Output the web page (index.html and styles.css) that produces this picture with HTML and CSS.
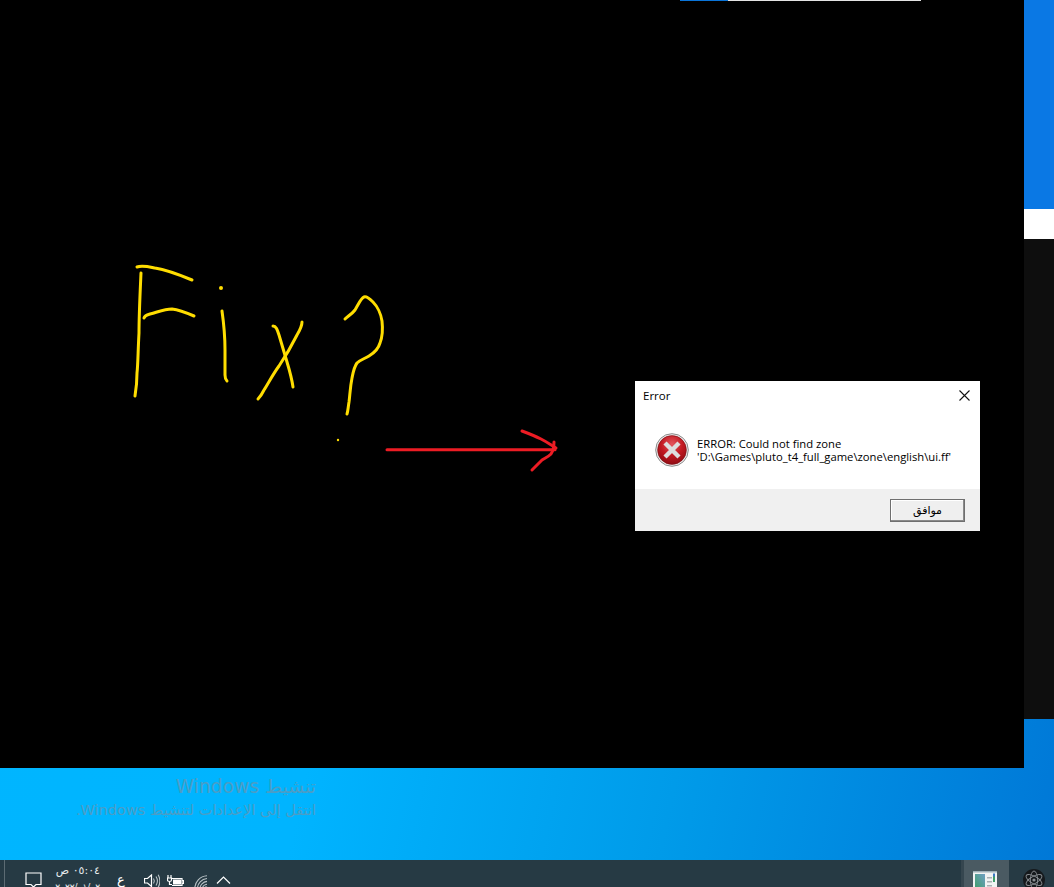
FILE: index.html
```html
<!DOCTYPE html>
<html lang="ar">
  <head>
    <meta charset="UTF-8" />
    <title>Error</title>
    <link rel="stylesheet" href="styles.css">
  </head>

  <body>
    <div class="screen">
      <div class="desktop">
        <div class="game">
          <div class="load-bar">
            <div class="load-done"></div>
            <div class="load-rest"></div>
          </div>

          <!-- the scribble drawn over the screenshot -->
          <svg class="scribble" width="1024" height="768" viewBox="0 0 1024 768">
            <g class="ink-yellow">
              <path d="M137 267 C142 265 150 267 155 268 C168 270 180 275 192 280" />
              <path d="M141 273 C140 295 139 315 139 333 C138 350 138 365 137 373 C137 383 136 390 135 396" />
              <path d="M144 318 C145 315 147 315 150 314 C158 312 164 309 172 309 C180 310 187 313 194 316" />
              <path d="M222 311 C224 325 225 335 225 350 C225 360 225 370 225 375 C225 379 226 380 227 381" />
              <path d="M273 326 C276 326 277 329 279 335 C282 345 285 355 287 362 C290 372 292 380 293 387" />
              <path d="M302 322 C302 326 300 330 297 335 C292 345 285 357 279 366 C273 374 268 384 264 390 C262 394 260 397 258 399" />
              <path d="M345 319 C348 316 352 314 355 310 C358 305 361 298 364 297 C367 296 370 299 373 302 C377 306 381 314 382 321 C383 330 382 338 380 343 C378 350 374 353 369 356 C364 359 360 360 357 363 C354 367 353 373 352 378 C350 388 350 395 349 402 C348 408 348 411 347 414" />
              <circle class="ink-dot" cx="221" cy="288" r="2" />
              <circle class="ink-dot" cx="338" cy="440" r="1.2" />
            </g>
            <g class="ink-red">
              <path d="M387 449.7 H555" />
              <path d="M522 431 C530 434 535 436 541 439 C547 442 551 445 556 448" />
              <path d="M554 442 C554 446 553 451 551 454 C548 457 545 458 542 460 C538 464 535 467 532 470" />
            </g>
          </svg>
        </div>

        <div class="side">
          <div class="side-blue"></div>
          <div class="side-white"></div>
          <div class="side-dark"></div>
        </div>

        <div class="activate" dir="rtl">
          <div class="activate-title">تنشيط Windows</div>
          <div class="activate-sub">انتقل إلى الإعدادات لتنشيط Windows.</div>
        </div>

        <div class="dialog">
          <div class="dialog-title">
            <span>Error</span>
            <svg width="11" height="11" viewBox="0 0 11 11">
              <path class="close-x" d="M0.5 0.5 L10.5 10.5 M10.5 0.5 L0.5 10.5" />
            </svg>
          </div>
          <div class="dialog-body">
            <svg class="error-icon" width="34" height="34" viewBox="0 0 34 34">
              <defs>
                <radialGradient id="redball" cx="50%" cy="30%" r="75%">
                  <stop offset="0" stop-color="#e4565e" />
                  <stop offset="0.5" stop-color="#c21a22" />
                  <stop offset="1" stop-color="#8a0a12" />
                </radialGradient>
              </defs>
              <circle cx="17" cy="17" r="16.3" fill="#eeeeee" stroke="#8a8a8a" stroke-width="1" />
              <circle cx="17" cy="17" r="14.4" fill="url(#redball)" stroke="#7a1015" stroke-width="0.6" />
              <path d="M10 10 L24 24 M24 10 L10 24" stroke="#dedede" stroke-width="4.4" />
            </svg>
            <div class="dialog-text">
              ERROR: Could not find zone<br />
              'D:\Games\pluto_t4_full_game\zone\english\ui.ff'
            </div>
          </div>
          <div class="dialog-foot">
            <button class="dialog-btn">موافق</button>
          </div>
        </div>
      </div>

      <div class="taskbar">
        <div class="task-sep"></div>

        <svg class="notify" width="17" height="17" viewBox="0 0 17 17">
          <path class="tray-line" d="M1 1 H16 V12.5 H11 L8.5 15 L6 12.5 H1 Z" />
        </svg>

        <div class="clock" dir="rtl">
          <div>٠٥:٠٤ ص</div>
          <div class="clock-date">٢٠٢٢/٠١/٠٢</div>
        </div>

        <div class="lang">ع</div>

        <svg class="volume" width="16" height="14" viewBox="0 0 16 14">
          <path class="tray-line" d="M0.5 4.5 H3.5 L7.5 1 V12.5 L3.5 9 H0.5 Z" />
          <path class="tray-dim" d="M9.5 4.5 C10.5 6 10.5 8 9.5 9.5" />
          <path class="tray-dim" d="M12 2.5 C13.6 5 13.6 9 12 11.5" />
          <path class="tray-dim" d="M14.2 0.8 C16.2 4.5 16.2 9.5 14.2 13.2" />
        </svg>

        <svg class="battery" width="17" height="12" viewBox="0 0 17 12">
          <path class="tray-line" d="M5 3.5 H15 V10.5 H5 M15 5.5 H16.5 V8.5 H15" />
          <rect x="6" y="4.5" width="8" height="5" fill="#fff" />
          <path class="tray-line" d="M1 0 V3 M4 0 V3 M0.5 3 H4.5 V5 C4.5 6 3.5 6.5 2.5 6.5 C1.5 6.5 0.5 6 0.5 5 Z M2.5 6.5 V9.5 H5" />
        </svg>

        <svg class="network" width="14" height="14" viewBox="0 0 14 14">
          <path class="tray-dim" d="M0.8 13.5 C0.8 7 6 1.2 13 0.8" />
          <path class="tray-dim" d="M3.5 13.5 C3.5 8.5 7.5 4 13 3.5" />
          <path class="tray-dim" d="M6 13.5 C6 10 9 6.8 13 6.4" />
          <path class="tray-dim" d="M8.5 13.5 C8.5 11.5 10.5 9.5 13 9.2" />
          <circle cx="12" cy="13" r="1.6" fill="#fff" />
        </svg>

        <svg class="chevron" width="15" height="8" viewBox="0 0 15 8">
          <path class="tray-line" d="M1 7.5 L7.5 1 L14 7.5" />
        </svg>

        <div class="task-active">
          <svg width="24" height="18" viewBox="0 0 24 18">
            <defs>
              <linearGradient id="pane" x1="0" y1="1" x2="1" y2="0">
                <stop offset="0" stop-color="#3f9e6a" />
                <stop offset="1" stop-color="#6f9fc4" />
              </linearGradient>
            </defs>
            <rect width="24" height="18" fill="#f1f3f3" />
            <rect x="0" y="0" width="24" height="1.5" fill="#9fb0b8" />
            <rect x="2" y="3" width="10" height="15" fill="url(#pane)" />
            <rect x="14" y="6" width="5" height="1.5" fill="#a9b0b3" />
            <rect x="14" y="10" width="5" height="1.5" fill="#a9b0b3" />
            <rect x="14" y="14" width="5" height="1.5" fill="#a9b0b3" />
            <rect x="20" y="3" width="2" height="8" fill="#3f9e6a" />
            <rect x="20" y="2.5" width="2" height="3" fill="#3b78c4" />
          </svg>
        </div>

        <div class="atom">
          <svg width="22" height="22" viewBox="0 0 22 22">
            <circle cx="11" cy="11" r="11" fill="#15191c" />
            <g class="atom-orbit">
              <ellipse cx="11" cy="11" rx="9" ry="3.6" transform="rotate(30 11 11)" />
              <ellipse cx="11" cy="11" rx="9" ry="3.6" transform="rotate(-30 11 11)" />
              <ellipse cx="11" cy="11" rx="9" ry="3.6" transform="rotate(90 11 11)" />
            </g>
            <circle cx="11" cy="11" r="1.6" fill="#8b9094" />
          </svg>
        </div>
      </div>
    </div>
  </body>
</html>
```

FILE: styles.css
```css
* {
  margin: 0;
  padding: 0;
  box-sizing: border-box;
}

body {
  background: #000;
  font-family: "DejaVu Sans", "Noto Sans", sans-serif;
}

.screen {
  width: 1054px;
  height: 887px;
  overflow: hidden;
  display: flex;
  flex-direction: column;
}

/* desktop */

.desktop {
  position: relative;
  height: 860px;
  display: flex;
  align-items: flex-start;
  background: linear-gradient(102deg, #00b6ff 0%, #00b4ff 38%, #009be9 68%, #0078d7 100%);
}

.game {
  position: relative;
  width: 1024px;
  height: 768px;
  background: #000;
}

.load-bar {
  display: flex;
  height: 1px;
  margin-left: 680px;
}

.load-done {
  width: 48px;
  background: #0a74d8;
}

.load-rest {
  width: 193px;
  background: #e4e4e4;
}

.scribble {
  position: absolute;
  top: 0;
  left: 0;
}

.scribble path {
  fill: none;
  stroke-linecap: round;
  stroke-linejoin: round;
}

.ink-yellow path {
  stroke: #ffdd00;
  stroke-width: 3;
}

.ink-dot {
  fill: #ffdd00;
}

.ink-red path {
  stroke: #ed1c24;
  stroke-width: 3;
}

.side {
  width: 30px;
  display: flex;
  flex-direction: column;
}

.side-blue {
  height: 209px;
  background: #0a78e4;
}

.side-white {
  height: 30px;
  background: #fff;
}

.side-dark {
  height: 480px;
  background: #0e0e0e;
}

/* activation watermark */

.activate {
  position: absolute;
  top: 774px;
  left: 16px;
  width: 300px;
  color: #4b9dc6;
  font-family: "DejaVu Sans", sans-serif;
  white-space: nowrap;
}

.activate-title {
  font-size: 18.7px;
  line-height: 25px;
}

.activate-sub {
  font-size: 14.5px;
  line-height: 22px;
}

/* error dialog */

.dialog {
  position: absolute;
  top: 381px;
  left: 635px;
  width: 345px;
  height: 150px;
  display: flex;
  flex-direction: column;
  background: #fff;
  color: #000;
}

.dialog-title {
  height: 30px;
  padding: 0 10px 2px 8px;
  display: flex;
  align-items: center;
  justify-content: space-between;
  font-family: "Open Sans", sans-serif;
  font-size: 11.5px;
}

.close-x {
  fill: none;
  stroke: #111;
  stroke-width: 1.1;
}

.dialog-body {
  flex: 1;
  padding-left: 20px;
  display: flex;
  align-items: center;
  gap: 8px;
}

.error-icon {
  flex-shrink: 0;
}

.dialog-text {
  font-family: "Open Sans", sans-serif;
  font-size: 11.25px;
  line-height: 13px;
  white-space: nowrap;
}

.dialog-foot {
  height: 42px;
  padding: 10px 15px 0 0;
  display: flex;
  justify-content: flex-end;
  align-items: flex-start;
  background: #f0f0f0;
}

.dialog-btn {
  width: 75px;
  height: 23px;
  font-family: "DejaVu Sans", sans-serif;
  font-size: 11px;
  color: #000;
  background: #efefef;
  border: 1px solid #6f6f6f;
  box-shadow: inset -1px -1px 0 #8a8a8a, inset 1px 1px 0 #fff;
}

/* taskbar */

.taskbar {
  height: 27px;
  overflow: hidden;
  display: flex;
  align-items: flex-start;
  background: #263a44;
  color: #fff;
}

.task-sep {
  width: 1px;
  height: 27px;
  margin-left: 4px;
  background: #5c6b73;
}

.tray-line {
  fill: none;
  stroke: #fff;
  stroke-width: 1.2;
}

.tray-dim {
  fill: none;
  stroke: #b9c2c6;
  stroke-width: 1.1;
}

.notify {
  margin: 12px 0 0 20px;
  flex-shrink: 0;
}

.clock {
  width: 43px;
  margin: 2px 0 0 15px;
  font-size: 11px;
  line-height: 17px;
  white-space: nowrap;
  color: #e8ecee;
}

.clock-date {
  font-size: 9px;
}

.lang {
  width: 10px;
  margin: 12px 0 0 17px;
  font-size: 13px;
  line-height: 16px;
}

.volume {
  margin: 14px 0 0 17px;
  flex-shrink: 0;
}

.battery {
  margin: 15px 0 0 7px;
  flex-shrink: 0;
}

.network {
  margin: 15px 0 0 10px;
  flex-shrink: 0;
}

.chevron {
  margin: 16px 0 0 8px;
  flex-shrink: 0;
}

.task-active {
  width: 48px;
  height: 27px;
  margin-left: auto;
  padding: 11px 0 0 9px;
  background: #4a5a62;
  border-left: 3px solid #35464f;
}

.atom {
  width: 45px;
  height: 27px;
  padding: 9px 0 0 14px;
}

.atom-orbit ellipse {
  fill: none;
  stroke: #8b9094;
  stroke-width: 0.9;
}
```
